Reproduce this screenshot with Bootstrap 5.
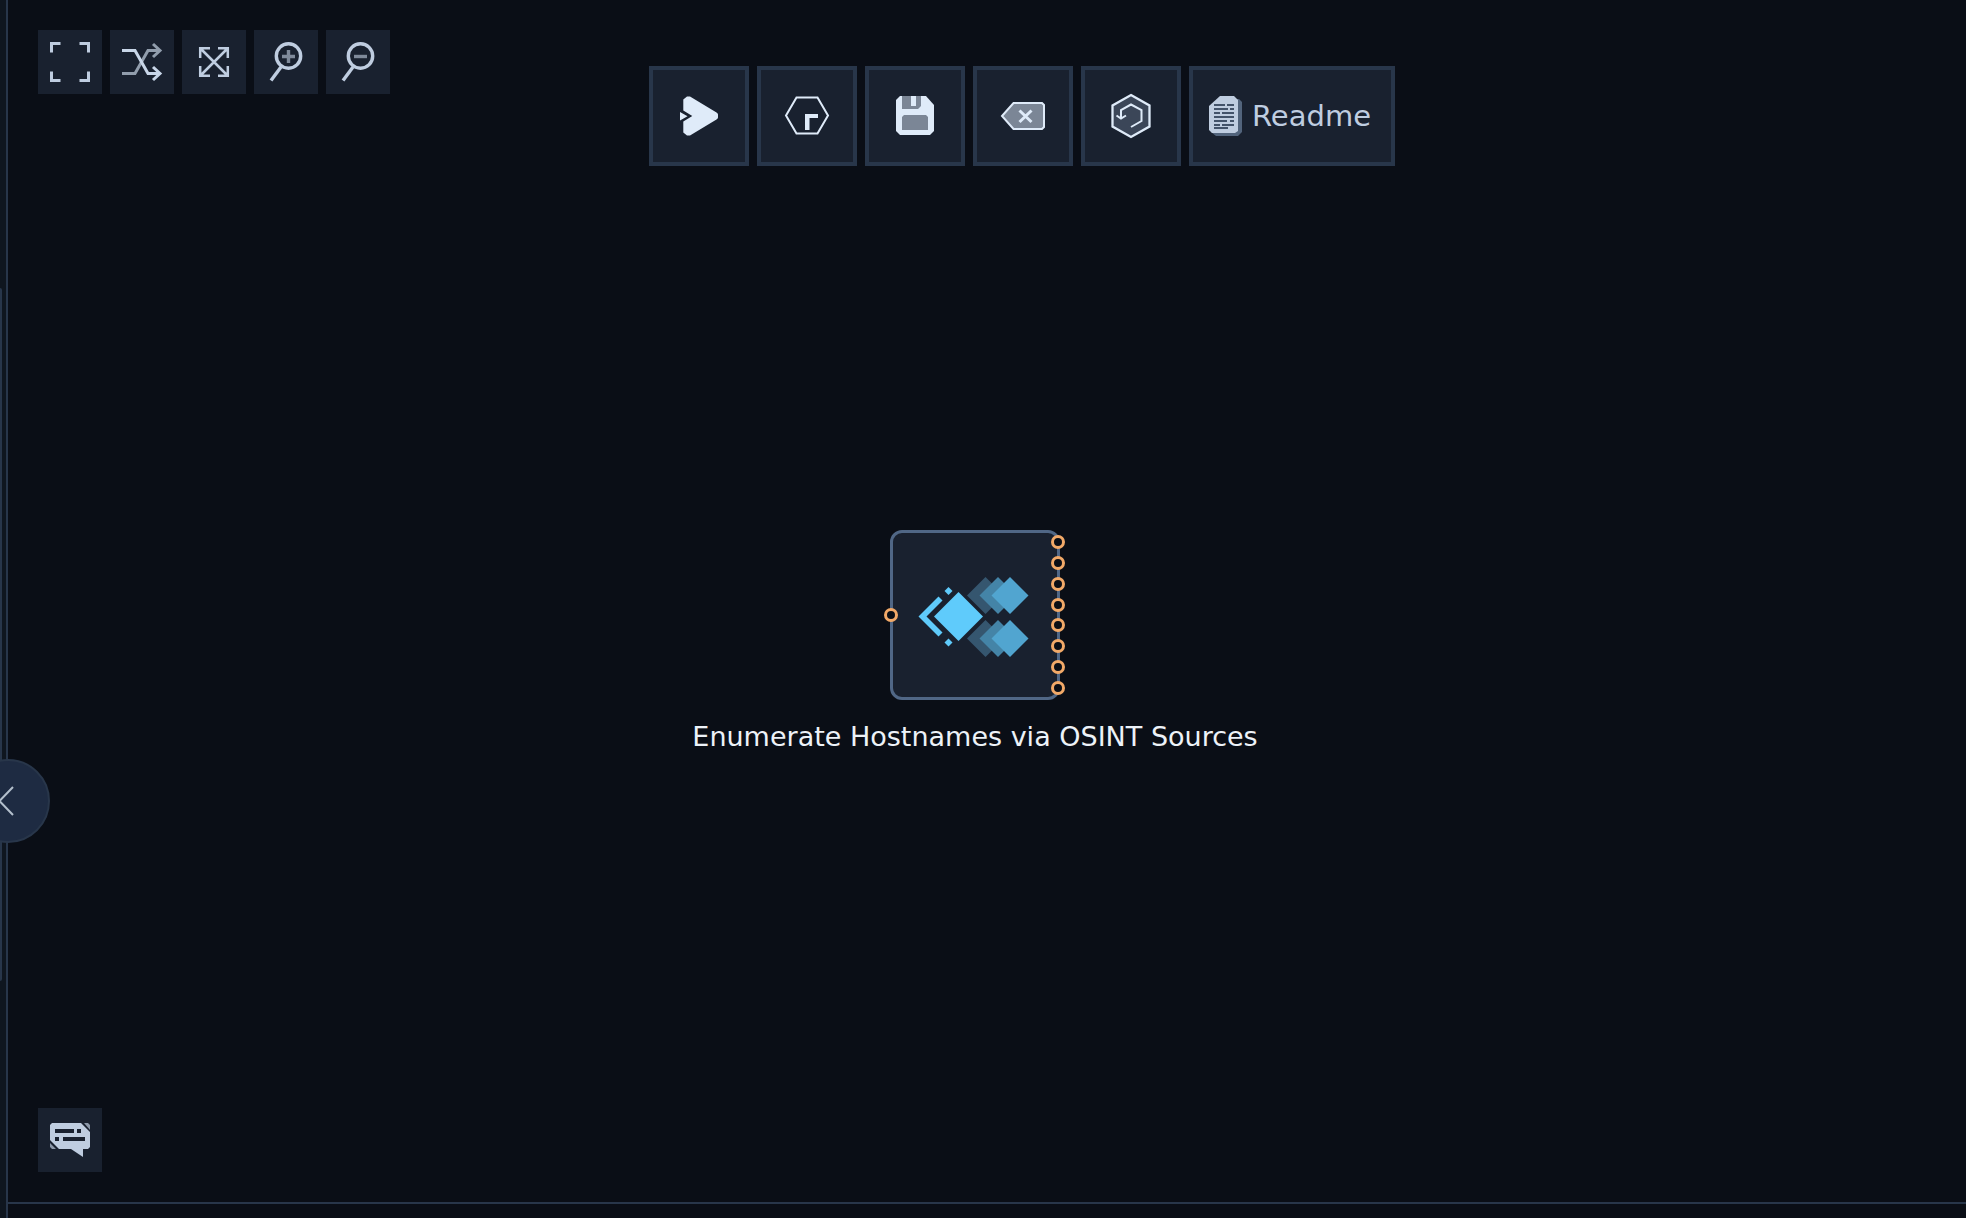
<!DOCTYPE html>
<html lang="en">
<head>
<meta charset="utf-8">
<meta name="viewport" content="width=device-width, initial-scale=1">
<title>Workflow editor</title>
<link href="https://cdn.jsdelivr.net/npm/bootstrap@5.3.0/dist/css/bootstrap.min.css" rel="stylesheet">
<style>
  :root {
    --canvas: #0a0e16; --panel: #19212f; --line: #28364a;
    --icon: #bfcde0; --bright: #dfebf9; --muted: #7b8696; --port: #f2a968;
  }
  body { background: var(--canvas); color: var(--icon); font-family: "DejaVu Sans", sans-serif; }
  .side-rail { width: 8px; background: #0f161f; border-right: 2px solid var(--line); }
  .rail-thumb { top: 288px; width: 2px; height: 693px; background: var(--line); border-radius: 0 2px 2px 0; }
  .rail-handle { left: -34px; top: 759px; width: 84px; height: 84px; background: #1e2b42; border: 2px solid var(--line); z-index: 2; }
  .footer-strip { height: 16px; border-top: 2px solid var(--line); }
  .tool-side { flex: 1 0 70px; padding: 30px 0 0 30px; }
  .tool-rest { flex: 1 0 0; }
  .tool-main { padding-top: 66px; }
  .tool-btn { width: 64px; height: 64px; padding: 0; border: 0; background: var(--panel); color: var(--icon); }
  .act-btn { width: 100px; height: 100px; padding: 0; border: 4px solid var(--line); background: var(--panel); color: var(--bright); }
  .act-btn.act-wide { width: auto; padding: 0 20px 0 16px; color: var(--icon); font-size: 29px; line-height: 40px; gap: 9px; }
  .tool-btn:hover, .act-btn:hover { background: #212c3e; }
  svg { display: block; fill: none; flex: none; }
  .flow-node { left: 882px; top: 530px; width: 170px; }
  .node-box { width: 170px; height: 170px; border: 3px solid #506786; border-radius: 12px; background: var(--panel); }
  .port { width: 14px; height: 14px; border: 3px solid var(--port); border-radius: 50%; background: var(--canvas); }
  .ports-in { left: -9px; top: 75px; }
  .ports-out { right: -8px; top: 2px; height: 160px; }
  .node-title { margin-top: 20px; font-size: 27px; line-height: 34px; color: #edf2f8; }
  .chat-dock { padding: 0 0 30px 30px; }
</style>
<script src="https://cdn.jsdelivr.net/npm/bootstrap@5.3.0/dist/js/bootstrap.bundle.min.js"></script>
</head>
<body class="vh-100 d-flex overflow-hidden">
  <aside class="side-rail position-relative flex-shrink-0">
    <div class="rail-thumb position-absolute start-0"></div>
    <button class="rail-handle btn p-0 rounded-circle position-absolute" aria-label="Collapse panel">
      <svg width="80" height="80" stroke="#b3bfcc" stroke-width="2"><path d="M45 26 31.500 40 45 54"/></svg>
    </button>
  </aside>

  <div class="d-flex flex-column flex-grow-1">
    <main class="position-relative d-flex flex-column justify-content-between flex-grow-1">
      <header class="d-flex align-items-start">
        <div class="tool-side d-flex gap-2">
          <button class="tool-btn btn rounded-0" aria-label="Fullscreen">
            <svg width="64" height="64" stroke="currentColor" stroke-width="3"><path d="M13.500 22.500v-9h9M41.500 13.500h9v9M50.500 41.500v9h-9M22.500 50.500h-9v-9"/></svg>
          </button>
          <button class="tool-btn btn rounded-0" aria-label="Auto layout">
            <svg width="64" height="64" stroke-width="3"><g stroke="#919dac"><path d="M12 43.500h13l13-23h12"/><path d="m43 14 7 6.500-7 6.500"/></g><g stroke="#c8d6e8"><path d="M12 20.500h13l13 23h12"/><path d="m43 37 7 6.500-7 6.500"/></g></svg>
          </button>
          <button class="tool-btn btn rounded-0" aria-label="Fit to view">
            <svg width="64" height="64" stroke="currentColor" stroke-width="2.500"><path d="M18.200 28V18.200H28M36 18.200h9.800V28M45.800 36v9.800H36M28 45.800h-9.800V36M18 18l28 28M46 18 18 46"/></svg>
          </button>
          <button class="tool-btn btn rounded-0" aria-label="Zoom in">
            <svg width="64" height="64" stroke="currentColor" stroke-width="3.400"><circle cx="34.500" cy="26" r="12.200"/><path d="M27 37 17 50.500"/><path stroke="#7f8a9a" d="M28 26.500h13M34.500 20v13"/></svg>
          </button>
          <button class="tool-btn btn rounded-0" aria-label="Zoom out">
            <svg width="64" height="64" stroke="currentColor" stroke-width="3.400"><circle cx="34.500" cy="26" r="12.200"/><path d="M27 37 17 50.500"/><path stroke="#7f8a9a" d="M28 26.500h13"/></svg>
          </button>
        </div>

        <div class="tool-main d-flex gap-2">
          <button class="act-btn btn rounded-0" aria-label="Run">
            <svg width="92" height="92"><path fill="currentColor" d="M30.300 29.500 34 26.500h3L63.500 42.500q1.500 1 1.500 2v3q0 1-1.500 2L37 65.500h-3l-3.700-3V51.500l9-5.500-9-5.500zM27 42v8.500l7.500-4.300z"/></svg>
          </button>
          <button class="act-btn btn rounded-0" aria-label="Add module">
            <svg width="92" height="92"><path stroke="currentColor" stroke-width="2" d="M35.500 27.500h21l10.500 18-10.500 18h-21L25 45.500z"/><path fill="currentColor" d="M44 44h13v4h-8.500v12H44z"/></svg>
          </button>
          <button class="act-btn btn rounded-0" aria-label="Save">
            <svg width="92" height="92"><path fill="currentColor" d="M31 26h26l8 9v26l-4 4H31l-4-4V30z"/><path fill="#7b8696" d="M33 26h19v10l-3 3H33zM35 45h22l2 2v13H33V47z"/><path fill="currentColor" d="M42 26h5v10h-5z"/></svg>
          </button>
          <button class="act-btn btn rounded-0" aria-label="Clear">
            <svg width="92" height="92" stroke="currentColor"><path fill="#7b8696" stroke-width="2" d="M25 46 36.500 33H65l2 2v22l-2 2H36.500z"/><path stroke-width="3" d="m42.500 40.500 12 11.500M54.500 40.500l-12 11.500"/></svg>
          </button>
          <button class="act-btn btn rounded-0" aria-label="Restore version">
            <svg width="92" height="92" stroke="currentColor" stroke-width="2"><path fill="#3b4658" stroke-width="2.300" d="m46 25 18.500 10.500v21L46 67 27.500 56.500v-21z"/><path d="m46 57 10.500-6V40L46 34.500 36 40v9M31.500 45.500 36 48.500l5-3"/></svg>
          </button>
          <button class="act-btn act-wide btn rounded-0 d-flex align-items-center">
            <svg width="34" height="40"><path fill="#52647c" d="M28 3h2l3 3v30l-4 4H7l-5-4z"/><path fill="currentColor" d="M11 0h14l4 4v31l-3 2H3l-3-3V10z"/><path stroke="#43536a" stroke-width="2" d="M5 9h11M18 9h7M5 13h14M21 13h4M5 17h6M13 17h12M5 21h20M5 25h13M21 25h4M5 29h6M13 29h12M5 32h14"/></svg>
            <span>Readme</span>
          </button>
        </div>
        <div class="tool-rest"></div>
      </header>

      <section class="flow-node position-absolute d-flex flex-column align-items-center">
        <div class="node-box position-relative">
          <svg width="164" height="164"><g id="trail"><path fill="#35566f" d="m92.500 44 18.500 18.500L92.500 81 74 62.500z"/><path fill="#4484a7" d="m105 44 18.500 18.500L105 81 86.500 62.500z"/><path fill="#51a5d0" d="m117 44 18.500 18.500L117 81 98.500 62.500z"/></g><use href="#trail" y="43"/><path fill="#5fcbfb" d="M65.500 59 90 83.500 65.500 108 41 83.500zM45.500 63.500l4 4-16 16 16 16-4 4-20-20zM55.500 54l4 4-4 4-4-4zM55.500 105.500l4 4-4 4-4-4z"/></svg>
          <div class="ports-in position-absolute"><div class="port"></div></div>
          <div class="ports-out position-absolute d-flex flex-column justify-content-between">
            <div class="port"></div><div class="port"></div><div class="port"></div><div class="port"></div>
            <div class="port"></div><div class="port"></div><div class="port"></div><div class="port"></div>
          </div>
        </div>
        <div class="node-title text-nowrap">Enumerate Hostnames via OSINT Sources</div>
      </section>

      <div class="chat-dock">
        <button class="tool-btn btn rounded-0 d-block" aria-label="Comments">
          <svg width="64" height="64"><path fill="currentColor" d="M14 15h29l9 9v15l-2 2h-5v8L33 41H21l-9-9V17z"/><path fill="#8b97a8" d="M46 15h4l2 2v5zM12 35l6 6h-4l-2-2z"/><path fill="#19212f" d="M17 21h19v4H17zM39 21h4v4h-4zM17 29h4v4h-4zM25 29h22v4H25z"/></svg>
        </button>
      </div>
    </main>
    <footer class="footer-strip"></footer>
  </div>
</body>
</html>
